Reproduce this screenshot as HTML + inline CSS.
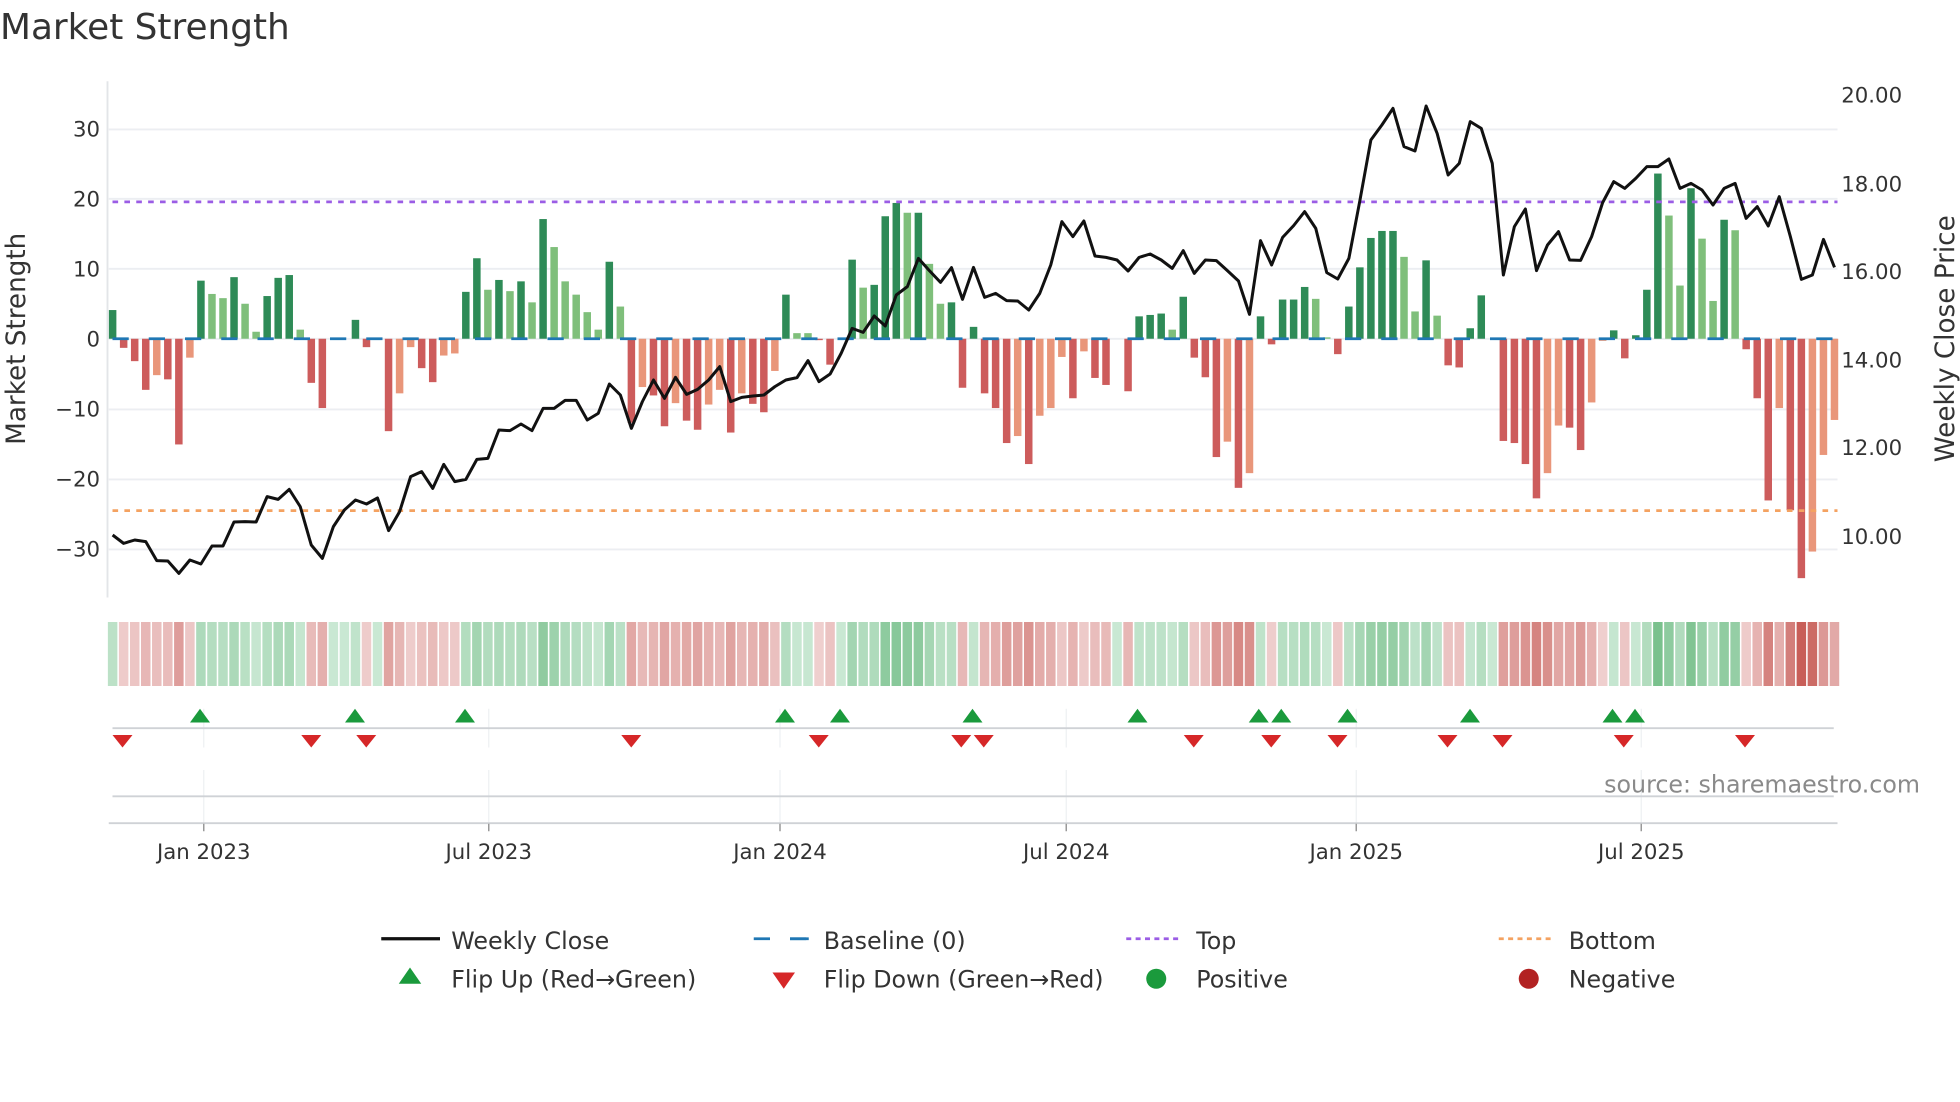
<!DOCTYPE html>
<html><head><meta charset="utf-8">
<style>
html,body{margin:0;padding:0;background:#fff;}
svg{display:block;font-family:"DejaVu Sans","Liberation Sans",sans-serif;}
</style></head>
<body>
<svg id="c" width="1960" height="1102" viewBox="0 0 1568 881.6" xmlns="http://www.w3.org/2000/svg">
<rect width="1568" height="882" fill="#fff"/>
<text x="0" y="31" font-size="28.7" fill="#333">Market Strength</text>
<!-- grid -->
<g stroke="#eceef2" stroke-width="1.5">
<line x1="87" x2="1470" y1="103.5" y2="103.5"/><line x1="87" x2="1470" y1="159" y2="159"/>
<line x1="87" x2="1470" y1="215" y2="215"/><line x1="87" x2="1470" y1="271" y2="271"/>
<line x1="87" x2="1470" y1="327.5" y2="327.5"/><line x1="87" x2="1470" y1="383.5" y2="383.5"/>
<line x1="87" x2="1470" y1="439.5" y2="439.5"/>
</g>
<line x1="86" x2="86" y1="65" y2="478" stroke="#e3e5e8" stroke-width="1.5"/>
<g font-size="17" fill="#333" text-anchor="end">
<text x="80" y="109">30</text><text x="80" y="165">20</text><text x="80" y="221">10</text>
<text x="80" y="277">0</text><text x="80" y="333">−10</text><text x="80" y="389">−20</text><text x="80" y="445">−30</text>
</g>
<g font-size="17" fill="#333">
<text x="1473" y="82">20.00</text><text x="1473" y="153">18.00</text><text x="1473" y="223">16.00</text>
<text x="1473" y="294">14.00</text><text x="1473" y="364">12.00</text><text x="1473" y="435">10.00</text>
</g>
<text transform="translate(20,271) rotate(-90)" font-size="21" fill="#333" text-anchor="middle">Market Strength</text>
<text transform="translate(1563,271) rotate(-90)" font-size="21" fill="#333" text-anchor="middle">Weekly Close Price</text>
<g id="bars"></g>
<line x1="90" x2="1467" y1="271" y2="271" stroke="#1f77b4" stroke-width="2.2" stroke-dasharray="13 16"/>
<line x1="90" x2="1470" y1="161.5" y2="161.5" stroke="#9b5de5" stroke-width="2.2" stroke-dasharray="4.5 5"/>
<line x1="90" x2="1470" y1="408.5" y2="408.5" stroke="#f4a261" stroke-width="2.2" stroke-dasharray="4.5 5"/>
<polyline id="price" fill="none" stroke="#111" stroke-width="2.4" stroke-linejoin="round"/>
<g id="heat"></g>
<!-- sub panels -->
<g stroke="#eef0f3" stroke-width="1">
<line x1="163" x2="163" y1="567" y2="598"/><line x1="391" x2="391" y1="567" y2="598"/><line x1="624" x2="624" y1="567" y2="598"/>
<line x1="853" x2="853" y1="567" y2="598"/><line x1="1085" x2="1085" y1="567" y2="598"/><line x1="1313" x2="1313" y1="567" y2="598"/>
<line x1="163" x2="163" y1="616" y2="658"/><line x1="391" x2="391" y1="616" y2="658"/><line x1="624" x2="624" y1="616" y2="658"/>
<line x1="853" x2="853" y1="616" y2="658"/><line x1="1085" x2="1085" y1="616" y2="658"/><line x1="1313" x2="1313" y1="616" y2="658"/>
</g>
<line x1="90" x2="1467" y1="582.5" y2="582.5" stroke="#cfd2d6" stroke-width="1.5"/>
<line x1="90" x2="1467" y1="637" y2="637" stroke="#cfd2d6" stroke-width="1.5"/>
<line x1="87" x2="1470" y1="658.5" y2="658.5" stroke="#cfd2d6" stroke-width="1.5"/>
<g stroke="#999" stroke-width="1.2">
<line x1="163" x2="163" y1="659" y2="665"/><line x1="391" x2="391" y1="659" y2="665"/><line x1="624" x2="624" y1="659" y2="665"/>
<line x1="853" x2="853" y1="659" y2="665"/><line x1="1085" x2="1085" y1="659" y2="665"/><line x1="1313" x2="1313" y1="659" y2="665"/>
</g>
<g id="flips"></g>
<g font-size="17" fill="#333" text-anchor="middle">
<text x="163" y="687">Jan 2023</text><text x="391" y="687">Jul 2023</text><text x="624" y="687">Jan 2024</text>
<text x="853" y="687">Jul 2024</text><text x="1085" y="687">Jan 2025</text><text x="1313" y="687">Jul 2025</text>
</g>
<text x="1536" y="634" font-size="19" fill="#8a8a8a" text-anchor="end">source: sharemaestro.com</text>
<!-- legend -->
<g font-size="19" fill="#333">
<line x1="305" x2="352" y1="751" y2="751" stroke="#111" stroke-width="2.6"/>
<text x="361" y="759">Weekly Close</text>
<line x1="603" x2="647" y1="751" y2="751" stroke="#1f77b4" stroke-width="2.2" stroke-dasharray="13 16"/>
<line x1="632" x2="647" y1="751" y2="751" stroke="#1f77b4" stroke-width="2.2"/>
<text x="659" y="759">Baseline (0)</text>
<line x1="901" x2="945" y1="751" y2="751" stroke="#9b5de5" stroke-width="2.2" stroke-dasharray="4 3.5"/>
<text x="957" y="759">Top</text>
<line x1="1199" x2="1243" y1="751" y2="751" stroke="#f4a261" stroke-width="2.2" stroke-dasharray="4 3.5"/>
<text x="1255" y="759">Bottom</text>
<polygon points="319,787 337,787 328,774" fill="#1a9a3c"/>
<text x="361" y="790">Flip Up (Red→Green)</text>
<polygon points="618,778 636,778 627,791" fill="#d62728"/>
<text x="659" y="790">Flip Down (Green→Red)</text>
<circle cx="925" cy="783" r="8" fill="#1a9a3c"/>
<text x="957" y="790">Positive</text>
<circle cx="1223" cy="783" r="8" fill="#b22222"/>
<text x="1255" y="790">Negative</text>
</g>
</svg>
<script>
(function(){
var NS="http://www.w3.org/2000/svg";
var B="4.1D,-1.3R,-3.2R,-7.3R,-5.2S,-5.8R,-15.1R,-2.7S,8.3D,6.4L,5.8L,8.8D,5L,1L,6.1D,8.7D,9.1D,1.3L,-6.3R,-9.9R,0N,0N,2.7D,-1.2R,0N,-13.2R,-7.8S,-1.2S,-4.2R,-6.2R,-2.4S,-2.1S,6.7D,11.5D,7L,8.4D,6.8L,8.2D,5.2L,17.1D,13.1L,8.2L,6.3L,3.8L,1.3L,"+
"11D,4.6L,-12R,-6.9S,-8.1R,-12.5R,-9.2S,-11.7R,-13R,-9.4S,-7.3S,-13.4R,-7.8S,-9.3R,-10.5R,-4.6S,6.3D,0.8L,0.8L,-0.2R,-3.7R,0N,11.3D,7.3L,7.7D,17.5D,19.4D,18L,18D,10.7L,5L,5.2D,-7R,1.7D,-7.8R,-9.9R,-14.9R,-13.9S,-17.9R,-11S,-9.9S,-2.6S,-8.5R,-1.8S,"+
"-5.6R,-6.6R,0N,-7.5R,3.2D,3.4D,3.6D,1.3L,6D,-2.7R,-5.5R,-16.9R,-14.7S,-21.3R,-19.2S,3.2D,-0.8R,5.6D,5.6D,7.4D,5.7L,0.2L,-2.2R,4.6D,10.2D,14.4D,15.4D,15.4D,11.7L,3.9L,11.2D,3.3L,-3.8R,-4.1R,1.5D,6.2D,0N,-14.6R,-14.9R,-17.9R,-22.8R,-19.2S,-12.4S,-12.7R,-15.9R,"+
"-9.1S,-0.3S,1.2D,-2.8R,0.5D,7D,23.6D,17.6L,7.6L,21.5D,14.3L,5.4L,17D,15.5L,-1.5R,-8.5R,-23.1R,-9.9S,-24.5R,-34.2R,-30.4S,-16.6S,-11.6S";
var P=[1365,1390,1380,1385,1442,1443,1480,1440,1452,1398,1398,1326,1325,1326,1250,1258,1228,1280,1395,1435,1340,1290,1260,1272,1254,1352,1295,1190,1175,1225,1153,1205,1198,1138,1135,1050,1052,1032,1052,985,985,961,961,1020,1000,
912,945,1045,965,900,955,892,943,928,900,860,965,952,948,945,920,900,893,842,905,882,820,745,757,708,738,645,620,535,572,607,563,658,562,652,640,662,663,690,640,555,425,470,423,
528,532,540,573,532,522,540,565,512,580,540,542,572,603,703,482,555,472,437,395,445,578,597,535,362,180,135,85,200,213,78,160,285,250,125,145,250,585,440,387,572,495,455,540,541,
470,368,305,325,295,260,260,237,325,310,330,375,325,310,415,380,438,350,470,598,585,478,562];
var col={D:"#2e8b57",L:"#7fbf7b",R:"#cd5c5c",S:"#e9967a"};
var bars=document.getElementById("bars"),heat=document.getElementById("heat");
var items=B.split(",");var pts=[];
for(var i=0;i<items.length;i++){
 var s=items[i],t=s.slice(-1),v=parseFloat(s.slice(0,-1));
 var x=90.1+i*8.83;
 if(t!=="N"&&Math.abs(v)>0.05){
  var r=document.createElementNS(NS,"rect");
  var y0=271,y1=271-v*5.6;
  r.setAttribute("x",(x-3).toFixed(2));r.setAttribute("width","6");
  r.setAttribute("y",Math.min(y0,y1).toFixed(2));r.setAttribute("height",Math.abs(y1-y0).toFixed(2));
  r.setAttribute("fill",col[t]);bars.appendChild(r);
 }
 var a=Math.min(Math.abs(v)/36,1);
 var c,lo,hi;
 if(v>=0){lo=[218,240,226];hi=[80,172,104];}else{lo=[245,224,224];hi=[198,88,82];}
 a=0.12+0.88*a;
 c="rgb("+[0,1,2].map(function(k){return Math.round(lo[k]+(hi[k]-lo[k])*a);}).join(",")+")";
 var h=document.createElementNS(NS,"rect");
 h.setAttribute("x",(x-4.4+0.6).toFixed(2));h.setAttribute("width","7.6");
 h.setAttribute("y","497.6");h.setAttribute("height","51.2");h.setAttribute("fill",c);
 heat.appendChild(h);
 pts.push(x.toFixed(1)+","+(64+P[i]*0.26667).toFixed(1));
}
document.getElementById("price").setAttribute("points",pts.join(" "));
var f=document.getElementById("flips");
[160,284,372,628,672,778,910,1007,1025,1078,1176,1290,1308].forEach(function(x){
 var p=document.createElementNS(NS,"polygon");
 p.setAttribute("points",(x-8)+",578 "+(x+8)+",578 "+x+",567");p.setAttribute("fill","#1a9a3c");f.appendChild(p);});
[98,249,293,505,655,769,787,955,1017,1070,1158,1202,1299,1396].forEach(function(x){
 var p=document.createElementNS(NS,"polygon");
 p.setAttribute("points",(x-8)+",588 "+(x+8)+",588 "+x+",598");p.setAttribute("fill","#d62728");f.appendChild(p);});
})();
</script>
</body></html>
